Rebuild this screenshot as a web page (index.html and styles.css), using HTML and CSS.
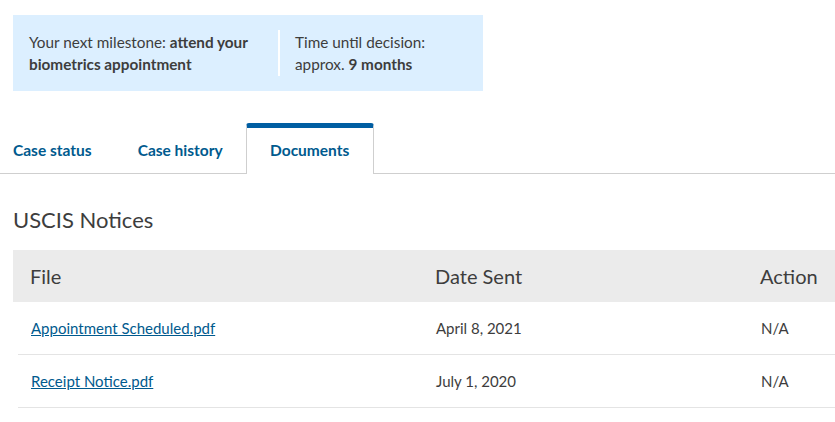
FILE: index.html
```html
<!DOCTYPE html>
<html lang="en">
<head>
    <meta charset="UTF-8">
    <meta name="viewport" content="width=device-width, initial-scale=1.0">
    <title>Case Documents</title>
    <link rel="stylesheet" href="styles.css">
</head>
<body>
    <div class="milestone">
        <div class="milestone-item">
            <p>Your next milestone: <strong>attend your</strong><br><strong>biometrics appointment</strong></p>
        </div>
        <div class="milestone-item milestone-time">
            <p>Time until decision:<br>approx. <strong>9 months</strong></p>
        </div>
    </div>

    <nav class="tabs">
        <a class="tab" href="#">Case status</a>
        <a class="tab" href="#">Case history</a>
        <a class="tab active" href="#">Documents</a>
    </nav>

    <h2 class="section-title">USCIS Notices</h2>

    <div class="doc-table">
        <div class="doc-row doc-head">
            <div>File</div>
            <div>Date Sent</div>
            <div>Action</div>
        </div>
        <div class="doc-row">
            <div><a href="#">Appointment Scheduled.pdf</a></div>
            <div>April 8, 2021</div>
            <div>N/A</div>
        </div>
        <div class="doc-row">
            <div><a href="#">Receipt Notice.pdf</a></div>
            <div>July 1, 2020</div>
            <div>N/A</div>
        </div>
    </div>
</body>
</html>
```

FILE: styles.css
```css
body {
    font-family: Lato, "Open Sans", sans-serif;
    color: #3d3d3d;
    margin: 0;
    background: white;
}
.milestone {
    display: flex;
    align-items: stretch;
    width: 470px;
    height: 76px;
    box-sizing: border-box;
    margin: 15px 0 0 13px;
    padding: 15px 16px;
    background: #dcefff;
    font-size: 15.3px;
    line-height: 22px;
}
.milestone-item {
    display: flex;
    align-items: center;
    width: 233px;
    padding-right: 16px;
}
.milestone-item p {
    margin: 0;
}
.milestone-time {
    width: 150px;
    padding: 0 0 0 15px;
    border-left: 2px solid white;
}
.milestone strong {
    font-weight: 700;
}
.tabs {
    display: flex;
    align-items: flex-end;
    margin-top: 32px;
    padding-left: 13px;
    border-bottom: 1px solid #cfcfcf;
    height: 50px;
}
.tab {
    color: #005a8e;
    font-weight: 700;
    font-size: 15.5px;
    text-decoration: none;
    line-height: 20px;
    padding: 0 0 13px 0;
    margin-right: 46px;
}
.tab.active {
    display: flex;
    align-items: flex-end;
    justify-content: center;
    box-sizing: border-box;
    width: 128px;
    height: 51px;
    margin: 0 0 -1px -23px;
    padding-bottom: 14px;
    background: white;
    border: 1px solid #cfcfcf;
    border-top: 5px solid #005ea2;
    border-bottom: none;
    border-radius: 3px 3px 0 0;
}
.section-title {
    font-size: 22px;
    font-weight: 400;
    margin: 33px 0 17px 13px;
    line-height: 26px;
}
.doc-table {
    margin-left: 13px;
}
.doc-row {
    display: grid;
    grid-template-columns: 405px 325px 1fr;
    align-items: center;
    box-sizing: border-box;
    height: 53px;
    margin-left: 5px;
    padding-left: 13px;
    border-bottom: 1px solid #e4e4e4;
    font-size: 15px;
}
.doc-head {
    height: 52px;
    margin-left: 0;
    padding-left: 17px;
    background: #ebebeb;
    border-bottom: none;
    font-size: 20px;
}
.doc-row a {
    color: #005a8e;
    text-decoration: underline;
}
```
